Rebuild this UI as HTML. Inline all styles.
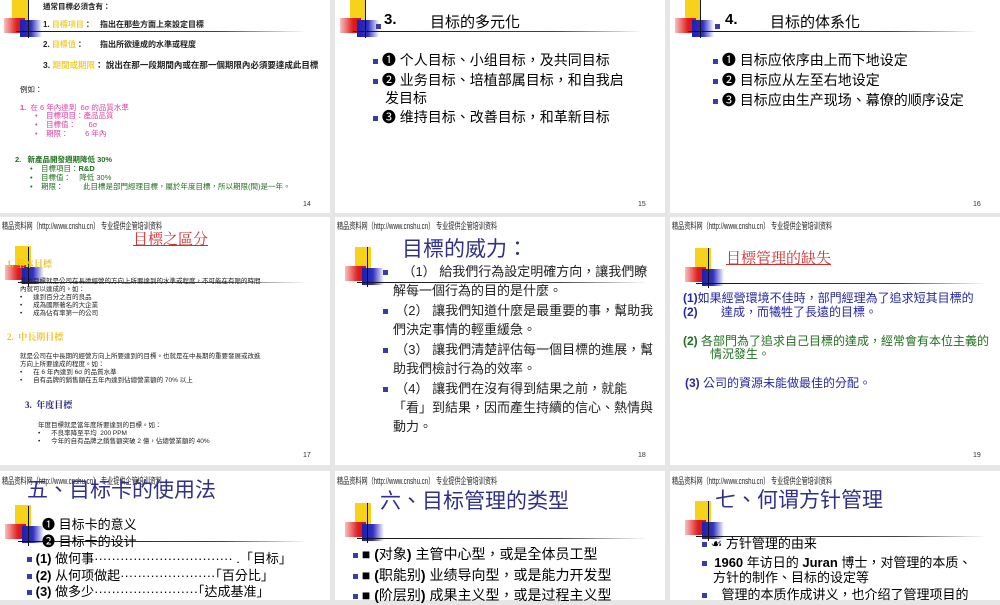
<!DOCTYPE html>
<html><head><meta charset="utf-8"><style>
*{margin:0;padding:0}
body{width:1000px;height:600px;background:#e6e6e6;position:relative;overflow:hidden;font-family:"Liberation Sans","Noto Sans CJK TC",sans-serif;color:#000}
.s{position:absolute;background:#fff;overflow:hidden}
.a{position:absolute;white-space:nowrap}
.y{position:absolute;width:16px;height:21px;background:#f6d21a}
.r{position:absolute;width:21px;height:15px;background:linear-gradient(90deg,#f8c0c0,#e02020 60%,#d01010)}
.b{position:absolute;width:22px;height:17px;background:linear-gradient(90deg,#2020b0,#3030c0 50%,#fff)}
.v{position:absolute;width:1px;height:40px;background:#111}
.h{position:absolute;height:1px;width:290px;background:linear-gradient(90deg,#111,#444 70%,#fff)}
.hd{position:absolute;font-size:9px;transform:scaleX(.68);transform-origin:0 0;white-space:nowrap;font-family:"Liberation Sans","Noto Sans CJK SC",sans-serif;color:#222}
.sq{display:inline-block;width:5px;height:5px;background:#3a3aa8;vertical-align:middle}
.n{position:absolute;font-size:7px;color:#333}
</style></head><body>
<div class="s" style="left:0;top:0;width:330px;height:213px"></div>
<div class="s" style="left:335px;top:0;width:330px;height:213px"></div>
<div class="s" style="left:670px;top:0;width:330px;height:213px"></div>
<div class="s" style="left:0;top:217px;width:330px;height:248px"></div>
<div class="s" style="left:335px;top:217px;width:330px;height:248px"></div>
<div class="s" style="left:670px;top:217px;width:330px;height:248px"></div>
<div class="s" style="left:0;top:471px;width:330px;height:129px"></div>
<div class="s" style="left:335px;top:471px;width:330px;height:129px"></div>
<div class="s" style="left:670px;top:471px;width:330px;height:129px"></div>

<div style="position:absolute;left:0;top:0"><div class="y" style="left:12px;top:-1px"></div><div class="r" style="left:4px;top:18px"></div><div class="b" style="left:20px;top:20px"></div><div class="v" style="left:28px;top:-2px"></div><div class="h" style="left:16px;top:31px"></div></div>
<div style="position:absolute;left:335px;top:0"><div class="y" style="left:15px;top:-1px"></div><div class="r" style="left:5px;top:18px"></div><div class="b" style="left:22px;top:20px"></div><div class="v" style="left:30px;top:-2px"></div><div class="h" style="left:18px;top:31px"></div></div>
<div style="position:absolute;left:670px;top:0"><div class="y" style="left:15px;top:-1px"></div><div class="r" style="left:5px;top:18px"></div><div class="b" style="left:22px;top:20px"></div><div class="v" style="left:30px;top:-2px"></div><div class="h" style="left:18px;top:31px"></div></div>
<div style="position:absolute;left:0;top:217px"><div class="y" style="left:15px;top:29px"></div><div class="r" style="left:5px;top:48px"></div><div class="b" style="left:22px;top:50px"></div><div class="v" style="left:28px;top:30px"></div><div class="h" style="left:18px;top:65px"></div></div>
<div style="position:absolute;left:335px;top:217px"><div class="y" style="left:20px;top:30px"></div><div class="r" style="left:10px;top:49px"></div><div class="b" style="left:27px;top:51px"></div><div class="v" style="left:32px;top:30px"></div><div class="h" style="left:22px;top:65px"></div></div>
<div style="position:absolute;left:670px;top:217px"><div class="y" style="left:25px;top:31px"></div><div class="r" style="left:15px;top:50px"></div><div class="b" style="left:32px;top:52px"></div><div class="v" style="left:38px;top:31px"></div><div class="h" style="left:26px;top:66px"></div></div>
<div style="position:absolute;left:0;top:471px"><div class="y" style="left:15px;top:34px"></div><div class="r" style="left:5px;top:53px"></div><div class="b" style="left:22px;top:55px"></div><div class="v" style="left:28px;top:35px"></div><div class="h" style="left:18px;top:70px"></div></div>
<div style="position:absolute;left:335px;top:471px"><div class="y" style="left:20px;top:32px"></div><div class="r" style="left:10px;top:51px"></div><div class="b" style="left:27px;top:53px"></div><div class="v" style="left:32px;top:32px"></div><div class="h" style="left:22px;top:67px"></div></div>
<div style="position:absolute;left:670px;top:471px"><div class="y" style="left:25px;top:30px"></div><div class="r" style="left:15px;top:49px"></div><div class="b" style="left:32px;top:51px"></div><div class="v" style="left:38px;top:30px"></div><div class="h" style="left:26px;top:65px"></div></div>

<div class="hd" style="left:2px;top:219px">精品资料网（http://www.cnshu.cn） 专业提供企管培训资料</div>
<div class="hd" style="left:337px;top:219px">精品资料网（http://www.cnshu.cn） 专业提供企管培训资料</div>
<div class="hd" style="left:672px;top:219px">精品资料网（http://www.cnshu.cn） 专业提供企管培训资料</div>
<div class="hd" style="left:2px;top:474px">精品资料网（http://www.cnshu.cn） 专业提供企管培训资料</div>
<div class="hd" style="left:337px;top:474px">精品资料网（http://www.cnshu.cn） 专业提供企管培训资料</div>
<div class="hd" style="left:672px;top:474px">精品资料网（http://www.cnshu.cn） 专业提供企管培训资料</div>

<!-- slide 14 -->
<div style="font-size:7.5px;font-weight:bold;color:#222">
<div class="a" style="left:43px;top:1px">通常目標必須含有：</div>
<div class="a" style="left:43px;top:19px;font-size:8px">1. <span style="color:#f0d040">目標項目</span>：</div><div class="a" style="left:100px;top:19px;font-size:8px">指出在那些方面上來設定目標</div>
<div class="a" style="left:43px;top:39px;font-size:8px">2. <span style="color:#f0d040">目標值</span>：</div><div class="a" style="left:100px;top:39px;font-size:8px">指出所欲達成的水準或程度</div>
<div class="a" style="left:43px;top:59px;font-size:8.5px">3. <span style="color:#f0d040">期間或期限</span>： 說出在那一段期間內或在那一個期限內必須要達成此目標</div>
<div class="a" style="left:20px;top:84px;font-weight:normal">例如：</div>
<div class="a" style="left:20px;top:102px;color:#e040a0;font-weight:normal"><b>1.</b>&nbsp; 在 6 年內達到 &nbsp;6σ 的品質水準</div>
<div class="a" style="left:35px;top:110px;color:#e040a0;font-weight:normal">•&nbsp;&nbsp;&nbsp; 目標項目：產品品質</div>
<div class="a" style="left:35px;top:119px;color:#e040a0;font-weight:normal">•&nbsp;&nbsp;&nbsp; 目標值：&nbsp;&nbsp;&nbsp;&nbsp;&nbsp; 6σ</div>
<div class="a" style="left:35px;top:128px;color:#e040a0;font-weight:normal">•&nbsp;&nbsp;&nbsp; 期限：&nbsp;&nbsp;&nbsp;&nbsp;&nbsp;&nbsp;&nbsp; 6 年內</div>
<div class="a" style="left:15px;top:154px;color:#207020">2.&nbsp;&nbsp; 新產品開發週期降低 30%</div>
<div class="a" style="left:30px;top:163px;color:#207020;font-weight:normal">•&nbsp;&nbsp;&nbsp; 目標項目：<b>R&amp;D</b></div>
<div class="a" style="left:30px;top:172px;color:#207020;font-weight:normal">•&nbsp;&nbsp;&nbsp; 目標值：&nbsp;&nbsp;&nbsp; 降低 30%</div>
<div class="a" style="left:30px;top:181px;color:#207020;font-weight:normal">•&nbsp;&nbsp;&nbsp; 期限：</div>
<div class="a" style="left:83px;top:181px;color:#207020;font-weight:normal">此目標是部門經理目標，屬於年度目標，所以期限(間)是一年。</div>
</div>
<div class="n" style="left:303px;top:201px">14</div>

<!-- slide 15 -->
<div class="a" style="left:376px;top:18px"><span class="sq"></span></div>
<div class="a" style="left:384px;top:11px;font-size:15px;font-weight:bold">3.</div>
<div class="a" style="left:430px;top:11px;font-size:15px">目标的多元化</div>
<div style="font-size:14px;line-height:19px">
<div class="a" style="left:373px;top:51px"><span class="sq"></span> ❶ 个人目标、小组目标，及共同目标</div>
<div class="a" style="left:373px;top:71px"><span class="sq"></span> ❷ 业务目标、培植部属目标，和自我启</div>
<div class="a" style="left:385px;top:89px">发目标</div>
<div class="a" style="left:373px;top:108px"><span class="sq"></span> ❸ 维持目标、改善目标，和革新目标</div>
</div>
<div class="n" style="left:638px;top:201px">15</div>

<!-- slide 16 -->
<div class="a" style="left:715px;top:18px"><span class="sq"></span></div>
<div class="a" style="left:725px;top:11px;font-size:15px;font-weight:bold">4.</div>
<div class="a" style="left:770px;top:11px;font-size:15px">目标的体系化</div>
<div style="font-size:14px;line-height:19px">
<div class="a" style="left:713px;top:51px"><span class="sq"></span> ❶ 目标应依序由上而下地设定</div>
<div class="a" style="left:713px;top:71px"><span class="sq"></span> ❷ 目标应从左至右地设定</div>
<div class="a" style="left:713px;top:91px"><span class="sq"></span> ❸ 目标应由生产现场、幕僚的顺序设定</div>
</div>
<div class="n" style="left:973px;top:201px">16</div>

<!-- slide 17 -->
<div class="a" style="left:133px;top:228px;font-size:15px;color:#d03030;text-decoration:underline;font-family:'Liberation Serif','Noto Serif CJK SC',serif">目標之區分</div>
<div style="font-size:6.5px;color:#222">
<div class="a" style="left:7px;top:257px;font-size:9px;color:#f0c020;font-weight:bold;font-family:'Liberation Serif','Noto Serif CJK SC',serif">1. 基本目標</div>
<div class="a" style="left:20px;top:275px">基本目標就是公司在長遠經營的方向上所要達到的水準或程度，不可能在有限的時間</div>
<div class="a" style="left:20px;top:283px">內就可以達成的。如：</div>
<div class="a" style="left:20px;top:291px">•&nbsp;&nbsp;&nbsp;&nbsp;&nbsp; 達到百分之百的良品</div>
<div class="a" style="left:20px;top:299px">•&nbsp;&nbsp;&nbsp;&nbsp;&nbsp; 成為國際著名的大企業</div>
<div class="a" style="left:20px;top:307px">•&nbsp;&nbsp;&nbsp;&nbsp;&nbsp; 成為佔有率第一的公司</div>
<div class="a" style="left:7px;top:330px;font-size:9px;color:#f0c020;font-weight:bold;font-family:'Liberation Serif','Noto Serif CJK SC',serif">2.&nbsp; 中長期目標</div>
<div class="a" style="left:20px;top:350px">就是公司在中長期的經營方向上所要達到的目標。也就是在中長期的重要發展或改進</div>
<div class="a" style="left:20px;top:358px">方向上所要達成的程度。如：</div>
<div class="a" style="left:20px;top:366px">•&nbsp;&nbsp;&nbsp;&nbsp;&nbsp; 在 6 年內達到 6σ 的品質水準</div>
<div class="a" style="left:20px;top:374px">•&nbsp;&nbsp;&nbsp;&nbsp;&nbsp; 自有品牌的銷售額在五年內達到佔總營業額的 70% 以上</div>
<div class="a" style="left:25px;top:398px;font-size:9px;color:#202080;font-weight:bold;font-family:'Liberation Serif','Noto Serif CJK SC',serif">3.&nbsp; 年度目標</div>
<div class="a" style="left:38px;top:419px">年度目標就是當年度所要達到的目標。如：</div>
<div class="a" style="left:38px;top:427px">•&nbsp;&nbsp;&nbsp;&nbsp;&nbsp; 不良率降至平均 &nbsp;200 PPM</div>
<div class="a" style="left:38px;top:435px">•&nbsp;&nbsp;&nbsp;&nbsp;&nbsp; 今年的自有品牌之銷售額突破 2 億，佔總營業額的 40%</div>
</div>
<div class="n" style="left:303px;top:452px">17</div>

<!-- slide 18 -->
<div class="a" style="left:402px;top:233px;font-size:21px;color:#303088">目標的威力：</div>
<div style="font-size:13px;line-height:19px;color:#222">
<div class="a" style="left:383px;top:262px"><span class="sq"></span>&nbsp;&nbsp;&nbsp;&nbsp;（1） 給我們行為設定明確方向，讓我們瞭</div>
<div class="a" style="left:393px;top:281px">解每一個行為的目的是什麼。</div>
<div class="a" style="left:383px;top:301px"><span class="sq"></span>&nbsp;&nbsp;（2） 讓我們知道什麼是最重要的事，幫助我</div>
<div class="a" style="left:393px;top:320px">們決定事情的輕重緩急。</div>
<div class="a" style="left:383px;top:340px"><span class="sq"></span>&nbsp;&nbsp;（3） 讓我們清楚評估每一個目標的進展，幫</div>
<div class="a" style="left:393px;top:359px">助我們檢討行為的效率。</div>
<div class="a" style="left:383px;top:379px"><span class="sq"></span>&nbsp;&nbsp;（4） 讓我們在沒有得到結果之前，就能</div>
<div class="a" style="left:393px;top:398px">「看」到結果，因而產生持續的信心、熱情與</div>
<div class="a" style="left:393px;top:417px">動力。</div>
</div>
<div class="n" style="left:638px;top:452px">18</div>

<!-- slide 19 -->
<div class="a" style="left:726px;top:247px;font-size:15px;color:#d03030;text-decoration:underline;font-family:'Liberation Serif','Noto Serif CJK SC',serif">目標管理的缺失</div>
<div style="font-size:12px;line-height:14px">
<div class="a" style="left:683px;top:291px;color:#2828a0"><b>(1)</b>如果經營環境不佳時，部門經理為了追求短其目標的</div>
<div class="a" style="left:683px;top:305px;color:#2828a0"><b>(2)</b>&nbsp;&nbsp;&nbsp;&nbsp;&nbsp;&nbsp; 達成，而犧牲了長遠的目標。</div>
<div class="a" style="left:683px;top:334px;color:#207020"><b>(2)</b> 各部門為了追求自己目標的達成，經常會有本位主義的</div>
<div class="a" style="left:710px;top:347px;color:#207020">情況發生。</div>
<div class="a" style="left:685px;top:376px;color:#2828a0"><b>(3)</b> 公司的資源未能做最佳的分配。</div>
</div>
<div class="n" style="left:973px;top:452px">19</div>

<!-- slide 20 -->
<div class="a" style="left:27px;top:474px;font-size:21px;color:#303088">五、目标卡的使用法</div>
<div style="font-size:13px;line-height:17px">
<div class="a" style="left:42px;top:516px">❶ 目标卡的意义</div>
<div class="a" style="left:42px;top:533px">❷ 目标卡的设计</div>
<div class="a" style="left:27px;top:550px"><span class="sq"></span> <b>(1)</b> 做何事································ .「目标」</div>
<div class="a" style="left:27px;top:567px"><span class="sq"></span> <b>(2)</b> 从何项做起······················「百分比」</div>
<div class="a" style="left:27px;top:583px"><span class="sq"></span> <b>(3)</b> 做多少························「达成基准」</div>
</div>

<!-- slide 21 -->
<div class="a" style="left:380px;top:485px;font-size:21px;color:#303088">六、目标管理的类型</div>
<div style="font-size:14px;line-height:19px">
<div class="a" style="left:353px;top:545px"><span class="sq"></span> ■ <b>(</b>对象<b>)</b> 主管中心型，或是全体员工型</div>
<div class="a" style="left:353px;top:566px"><span class="sq"></span> ■ <b>(</b>职能别<b>)</b> 业绩导向型，或是能力开发型</div>
<div class="a" style="left:353px;top:586px"><span class="sq"></span> ■ <b>(</b>阶层别<b>)</b> 成果主义型，或是过程主义型</div>
</div>

<!-- slide 22 -->
<div class="a" style="left:715px;top:484px;font-size:21px;color:#303088">七、何谓方针管理</div>
<div style="font-size:13px;line-height:16px">
<div class="a" style="left:702px;top:536px"><span class="sq"></span> ☙ 方针管理的由来</div>
<div class="a" style="left:702px;top:555px"><span class="sq"></span>&nbsp; <b>1960</b> 年访日的 <b>Juran</b> 博士，对管理的本质、</div>
<div class="a" style="left:713px;top:570px">方针的制作、目标的设定等</div>
<div class="a" style="left:702px;top:587px"><span class="sq"></span>&nbsp;&nbsp;&nbsp; 管理的本质作成讲义，也介绍了管理项目的</div>
</div>
</body></html>
